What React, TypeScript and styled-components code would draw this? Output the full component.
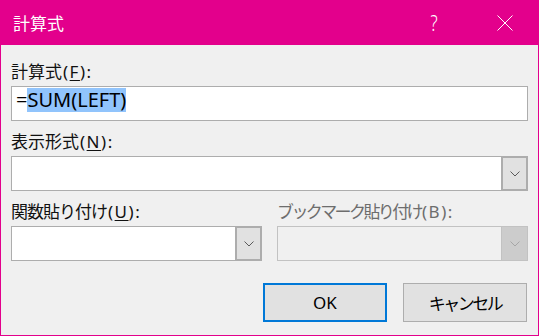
import styled, { createGlobalStyle } from 'styled-components'

const ACCENT = '#e3008c'

const GlobalStyle = createGlobalStyle`
  html, body {
    margin: 0;
    padding: 0;
    background: #f0f0f0;
  }
  body {
    font-family: "Noto Sans", "Noto Sans CJK JP", sans-serif;
  }
  * {
    box-sizing: border-box;
  }
`

const Window = styled.div`
  width: 539px;
  height: 336px;
  border: 1px solid ${ACCENT};
  border-top: none;
  background: #f0f0f0;
  display: flex;
  flex-direction: column;
`

const TitleBar = styled.div`
  height: 45px;
  flex: none;
  background: ${ACCENT};
  color: #ffffff;
  display: flex;
  align-items: center;
  gap: 25px;
  padding: 0 10px 0 12px;
`

const Title = styled.div`
  flex: 1;
  font-size: 17px;
  line-height: 22px;
  font-family: "Noto Sans CJK JP", sans-serif;
`

const HelpButton = styled.div`
  width: 46px;
  text-align: center;
  font-size: 21px;
  line-height: 24px;
  font-weight: 300;
  transform: scaleX(0.8);
`

const CloseButton = styled.div`
  width: 46px;
  display: flex;
  align-items: center;
  justify-content: center;
`

const Body = styled.div`
  padding: 15px 10px 0 10px;
  display: flex;
  flex-direction: column;
`

const Group = styled.div`
  display: flex;
  flex-direction: column;
  margin-bottom: 9px;
`

const Label = styled.div<{ $disabled?: boolean }>`
  height: 22px;
  line-height: 22px;
  font-size: 17px;
  margin-bottom: 4px;
  white-space: nowrap;
  color: ${(p) => (p.$disabled ? '#6d6d6d' : '#111111')};
`

// kana in the original font are proportional, so tighten where needed
const Jp = styled.span<{ $tight?: number }>`
  font-family: "Noto Sans CJK JP", sans-serif;
  letter-spacing: ${(p) => p.$tight ?? 0}px;
`

const Accel = styled.span`
  font-family: "Noto Sans", sans-serif;
  letter-spacing: 1.5px;
  margin-left: 1px;
`

const Mnemonic = styled.span`
  text-decoration: underline;
  text-underline-offset: 2px;
  text-decoration-thickness: 1px;
`

const TextBox = styled.div`
  height: 35px;
  background: #ffffff;
  border: 1px solid #adadad;
  padding: 1px 4px 0 4px;
  font-size: 20px;
  line-height: 24px;
  color: #000000;
  white-space: nowrap;
`

const Selected = styled.span`
  display: inline-block;
  height: 24px;
  line-height: 24px;
  background: #91c4fc;
`

const ComboBox = styled.div`
  display: flex;
  height: 35px;
`

const ComboField = styled.div<{ $disabled?: boolean }>`
  flex: 1;
  background: ${(p) => (p.$disabled ? '#f0f0f0' : '#ffffff')};
  border: 1px solid ${(p) => (p.$disabled ? '#c2c2c2' : '#adadad')};
  border-right: none;
`

const DropButton = styled.div<{ $disabled?: boolean }>`
  width: 27px;
  display: flex;
  align-items: center;
  justify-content: center;
  background: ${(p) => (p.$disabled ? '#cccccc' : '#e1e1e1')};
  border: ${(p) => (p.$disabled ? '1px solid #c2c2c2' : '2px solid #adadad')};
`

const Row = styled.div`
  display: grid;
  grid-template-columns: 1fr 1fr;
  column-gap: 15px;
`

const Buttons = styled.div`
  display: flex;
  justify-content: flex-end;
  gap: 16px;
  margin-top: 13px;
  padding-right: 1px;
`

const Button = styled.div<{ $primary?: boolean }>`
  width: 124px;
  height: 39px;
  display: flex;
  align-items: center;
  justify-content: center;
  background: #e1e1e1;
  border: ${(p) => (p.$primary ? '2px solid #0078d7' : '1px solid #adadad')};
  font-size: 17px;
  color: #000000;
`

const Chevron = ({ color }: { color: string }) => (
  <svg width="10" height="6" viewBox="0 0 10 6">
    <polyline points="0.5,0.5 5,5 9.5,0.5" fill="none" stroke={color} strokeWidth="1" />
  </svg>
)

const Combo = ({ disabled }: { disabled?: boolean }) => (
  <ComboBox>
    <ComboField $disabled={disabled} />
    <DropButton $disabled={disabled}>
      <Chevron color={disabled ? '#a6a6a6' : '#5a5a5a'} />
    </DropButton>
  </ComboBox>
)

type FieldLabelProps = { text: string; mnemonic: string; disabled?: boolean; tight?: number }

const FieldLabel = ({ text, mnemonic, disabled, tight }: FieldLabelProps) => (
  <Label $disabled={disabled}>
    <Jp $tight={tight}>{text}</Jp>
    <Accel>
      ({disabled ? mnemonic : <Mnemonic>{mnemonic}</Mnemonic>}):
    </Accel>
  </Label>
)

export default function App() {
  return (
    <>
      <GlobalStyle />
      <Window>
        <TitleBar>
          <Title>計算式</Title>
          <HelpButton>?</HelpButton>
          <CloseButton>
            <svg width="16" height="16" viewBox="0 0 16 16">
              <path d="M0.5 0.5 L15.5 15.5 M15.5 0.5 L0.5 15.5" stroke="#ffffff" strokeWidth="1" />
            </svg>
          </CloseButton>
        </TitleBar>
        <Body>
          <Group>
            <FieldLabel text="計算式" mnemonic="F" />
            <TextBox>
              =<Selected>SUM(LEFT)</Selected>
            </TextBox>
          </Group>
          <Group>
            <FieldLabel text="表示形式" mnemonic="N" />
            <Combo />
          </Group>
          <Row>
            <Group>
              <FieldLabel text="関数貼り付け" mnemonic="U" tight={-1} />
              <Combo />
            </Group>
            <Group>
              <FieldLabel text="ブックマーク貼り付け" mnemonic="B" disabled tight={-2.6} />
              <Combo disabled />
            </Group>
          </Row>
          <Buttons>
            <Button $primary>OK</Button>
            <Button>
              <Jp $tight={-2.5}>キャンセル</Jp>
            </Button>
          </Buttons>
        </Body>
      </Window>
    </>
  )
}
